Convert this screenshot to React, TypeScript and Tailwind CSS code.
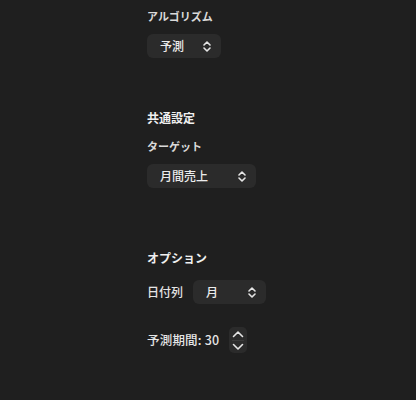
import React from 'react';

const font = { fontFamily: '"Noto Sans CJK JP", "Noto Sans", sans-serif' };

const UpDown = () => (
  <svg width="8" height="11" viewBox="0 0 8 11" fill="none" stroke="#e5e5e5" strokeWidth="1.6" strokeLinecap="round" strokeLinejoin="round">
    <path d="M1 4 L4 1 L7 4" />
    <path d="M1 7 L4 10 L7 7" />
  </svg>
);

const Select = ({ value, width }: { value: string; width: string }) => (
  <div className={`${width} h-6 rounded-md bg-[#2b2b2b] flex items-center justify-between pl-[13px] pr-[10px]`}>
    <span className="text-[12px] leading-none font-medium text-[#ececec]">{value}</span>
    <UpDown />
  </div>
);

const Stepper = () => (
  <div className="w-[18px] h-[26px] rounded-[5px] bg-[#2b2b2b] flex flex-col items-center justify-center">
    <svg width="12" height="8" viewBox="0 0 12 8" fill="none" stroke="#e5e5e5" strokeWidth="1.6" strokeLinecap="round" strokeLinejoin="round">
      <path d="M1.5 6.5 L6 2 L10.5 6.5" />
    </svg>
    <div className="w-[12px] h-px bg-[#3a3a3a] my-[2px]" />
    <svg width="12" height="8" viewBox="0 0 12 8" fill="none" stroke="#e5e5e5" strokeWidth="1.6" strokeLinecap="round" strokeLinejoin="round">
      <path d="M1.5 1.5 L6 6 L10.5 1.5" />
    </svg>
  </div>
);

export default function App() {
  return (
    <div className="min-h-[400px] w-full bg-[#1f1f1f] pt-2 pl-[147px]" style={font}>
      <div className="flex flex-col items-start">
        {/* Algorithm */}
        <div className="h-4 leading-4 text-[11px] font-bold text-[#d9d9d9]">アルゴリズム</div>
        <div className="mt-[10px]">
          <Select value="予測" width="w-[74px]" />
        </div>

        {/* Common settings */}
        <div className="mt-[52px] h-4 leading-4 text-[12px] font-bold text-[#f0f0f0]">共通設定</div>
        <div className="mt-3 h-4 leading-4 text-[11px] font-bold text-[#d9d9d9]">ターゲット</div>
        <div className="mt-[10px]">
          <Select value="月間売上" width="w-[109px]" />
        </div>

        {/* Options */}
        <div className="mt-[62px] h-4 leading-4 text-[12px] font-bold text-[#f0f0f0]">オプション</div>
        <div className="mt-[14px] flex items-center gap-[10px]">
          <span className="text-[12px] font-medium text-[#e5e5e5]">日付列</span>
          <Select value="月" width="w-[73px]" />
        </div>
        <div className="mt-[23px] flex items-center gap-[10px]">
          <span className="text-[12.5px] font-medium text-[#e5e5e5] tracking-[0.2px]">予測期間: 30</span>
          <Stepper />
        </div>
      </div>
    </div>
  );
}
